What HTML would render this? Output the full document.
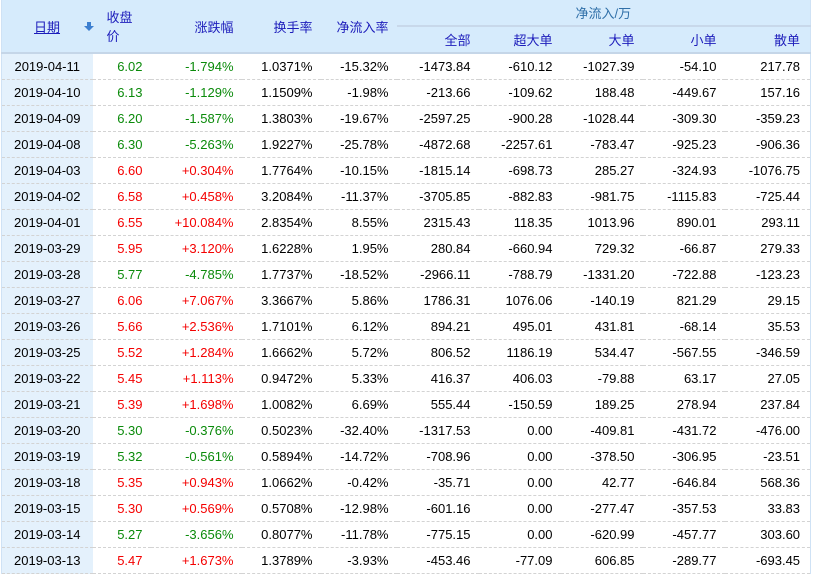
<!DOCTYPE html>
<html><head><meta charset="utf-8"><style>
body{margin:0;background:#fff;width:813px;height:578px;overflow:hidden;font-family:"Liberation Sans","Noto Sans CJK SC",sans-serif;font-size:13px;color:#000}
table{position:absolute;left:1px;top:0;border-collapse:collapse;table-layout:fixed;width:809px;border-left:1px solid #cfe2f5;border-right:1px solid #cfe2f5}
th{background:#d6ebfc;font-weight:normal;color:#1d1dbb;text-align:right;padding:0 8px 0 0;height:26px;font-size:13px}
thead tr:first-child th{height:25px}
th.sub{border-bottom:2px solid #c5d6e8;height:25px}
th.top{border-bottom:2px solid #c5d6e8}
th.grp{color:#2f6fa8;text-align:center;border-bottom:2px solid #c8d8ea;padding:0}
td{height:25px;border-bottom:1px dashed #d3d3d3;text-align:right;padding:0 8px 0 0;white-space:nowrap}
td.d{background:#e4f1fc;text-align:center;padding:0}
td:last-child{padding-right:10px}
.g{color:#0a8a0a}.r{color:#f40000}
a{color:#1d1dbb;text-decoration:underline}
</style></head><body>
<table>
<colgroup><col style="width:91px"><col style="width:58px"><col style="width:91px"><col style="width:79px"><col style="width:76px"><col style="width:82px"><col style="width:82px"><col style="width:82px"><col style="width:82px"><col style="width:86px"></colgroup>
<thead>
<tr>
<th rowspan="2" class="top" style="text-align:left;padding-left:32px;position:relative"><a>日期</a><svg style="position:absolute;left:82px;top:22px" width="10" height="10" viewBox="0 0 10 10"><rect x="3" y="0" width="4" height="5" fill="#3c7fd0"/><path d="M0 4h10L5 9z" fill="#3c7fd0"/></svg></th>
<th rowspan="2" class="top" style="text-align:left;padding-left:14px">收盘价</th>
<th rowspan="2" class="top">涨跌幅</th>
<th rowspan="2" class="top">换手率</th>
<th rowspan="2" class="top">净流入率</th>
<th colspan="5" class="grp">净流入/万</th>
</tr>
<tr><th class="sub">全部</th><th class="sub">超大单</th><th class="sub">大单</th><th class="sub">小单</th><th class="sub" style="padding-right:10px">散单</th></tr>
</thead>
<tbody>
<tr><td class="d">2019-04-11</td><td class="g">6.02</td><td class="g">-1.794%</td><td>1.0371%</td><td>-15.32%</td><td>-1473.84</td><td>-610.12</td><td>-1027.39</td><td>-54.10</td><td>217.78</td></tr>
<tr><td class="d">2019-04-10</td><td class="g">6.13</td><td class="g">-1.129%</td><td>1.1509%</td><td>-1.98%</td><td>-213.66</td><td>-109.62</td><td>188.48</td><td>-449.67</td><td>157.16</td></tr>
<tr><td class="d">2019-04-09</td><td class="g">6.20</td><td class="g">-1.587%</td><td>1.3803%</td><td>-19.67%</td><td>-2597.25</td><td>-900.28</td><td>-1028.44</td><td>-309.30</td><td>-359.23</td></tr>
<tr><td class="d">2019-04-08</td><td class="g">6.30</td><td class="g">-5.263%</td><td>1.9227%</td><td>-25.78%</td><td>-4872.68</td><td>-2257.61</td><td>-783.47</td><td>-925.23</td><td>-906.36</td></tr>
<tr><td class="d">2019-04-03</td><td class="r">6.60</td><td class="r">+0.304%</td><td>1.7764%</td><td>-10.15%</td><td>-1815.14</td><td>-698.73</td><td>285.27</td><td>-324.93</td><td>-1076.75</td></tr>
<tr><td class="d">2019-04-02</td><td class="r">6.58</td><td class="r">+0.458%</td><td>3.2084%</td><td>-11.37%</td><td>-3705.85</td><td>-882.83</td><td>-981.75</td><td>-1115.83</td><td>-725.44</td></tr>
<tr><td class="d">2019-04-01</td><td class="r">6.55</td><td class="r">+10.084%</td><td>2.8354%</td><td>8.55%</td><td>2315.43</td><td>118.35</td><td>1013.96</td><td>890.01</td><td>293.11</td></tr>
<tr><td class="d">2019-03-29</td><td class="r">5.95</td><td class="r">+3.120%</td><td>1.6228%</td><td>1.95%</td><td>280.84</td><td>-660.94</td><td>729.32</td><td>-66.87</td><td>279.33</td></tr>
<tr><td class="d">2019-03-28</td><td class="g">5.77</td><td class="g">-4.785%</td><td>1.7737%</td><td>-18.52%</td><td>-2966.11</td><td>-788.79</td><td>-1331.20</td><td>-722.88</td><td>-123.23</td></tr>
<tr><td class="d">2019-03-27</td><td class="r">6.06</td><td class="r">+7.067%</td><td>3.3667%</td><td>5.86%</td><td>1786.31</td><td>1076.06</td><td>-140.19</td><td>821.29</td><td>29.15</td></tr>
<tr><td class="d">2019-03-26</td><td class="r">5.66</td><td class="r">+2.536%</td><td>1.7101%</td><td>6.12%</td><td>894.21</td><td>495.01</td><td>431.81</td><td>-68.14</td><td>35.53</td></tr>
<tr><td class="d">2019-03-25</td><td class="r">5.52</td><td class="r">+1.284%</td><td>1.6662%</td><td>5.72%</td><td>806.52</td><td>1186.19</td><td>534.47</td><td>-567.55</td><td>-346.59</td></tr>
<tr><td class="d">2019-03-22</td><td class="r">5.45</td><td class="r">+1.113%</td><td>0.9472%</td><td>5.33%</td><td>416.37</td><td>406.03</td><td>-79.88</td><td>63.17</td><td>27.05</td></tr>
<tr><td class="d">2019-03-21</td><td class="r">5.39</td><td class="r">+1.698%</td><td>1.0082%</td><td>6.69%</td><td>555.44</td><td>-150.59</td><td>189.25</td><td>278.94</td><td>237.84</td></tr>
<tr><td class="d">2019-03-20</td><td class="g">5.30</td><td class="g">-0.376%</td><td>0.5023%</td><td>-32.40%</td><td>-1317.53</td><td>0.00</td><td>-409.81</td><td>-431.72</td><td>-476.00</td></tr>
<tr><td class="d">2019-03-19</td><td class="g">5.32</td><td class="g">-0.561%</td><td>0.5894%</td><td>-14.72%</td><td>-708.96</td><td>0.00</td><td>-378.50</td><td>-306.95</td><td>-23.51</td></tr>
<tr><td class="d">2019-03-18</td><td class="r">5.35</td><td class="r">+0.943%</td><td>1.0662%</td><td>-0.42%</td><td>-35.71</td><td>0.00</td><td>42.77</td><td>-646.84</td><td>568.36</td></tr>
<tr><td class="d">2019-03-15</td><td class="r">5.30</td><td class="r">+0.569%</td><td>0.5708%</td><td>-12.98%</td><td>-601.16</td><td>0.00</td><td>-277.47</td><td>-357.53</td><td>33.83</td></tr>
<tr><td class="d">2019-03-14</td><td class="g">5.27</td><td class="g">-3.656%</td><td>0.8077%</td><td>-11.78%</td><td>-775.15</td><td>0.00</td><td>-620.99</td><td>-457.77</td><td>303.60</td></tr>
<tr><td class="d">2019-03-13</td><td class="r">5.47</td><td class="r">+1.673%</td><td>1.3789%</td><td>-3.93%</td><td>-453.46</td><td>-77.09</td><td>606.85</td><td>-289.77</td><td>-693.45</td></tr>
</tbody>
</table>
</body></html>
